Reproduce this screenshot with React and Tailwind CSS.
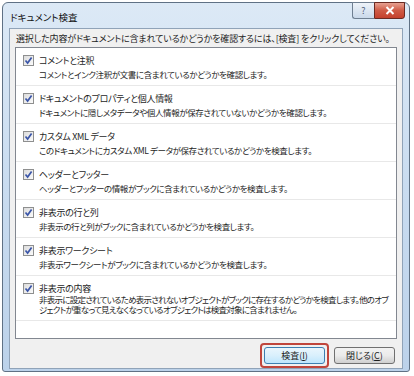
import React from "react";

const items = [
  ["コメントと注釈", ["コメントとインク注釈が文書に含まれているかどうかを確認します。"]],
  ["ドキュメントのプロパティと個人情報", ["ドキュメントに隠しメタデータや個人情報が保存されていないかどうかを確認します。"]],
  ["カスタム XML データ", ["このドキュメントにカスタム XML データが保存されているかどうかを検査します。"]],
  ["ヘッダーとフッター", ["ヘッダーとフッターの情報がブックに含まれているかどうかを検査します。"]],
  ["非表示の行と列", ["非表示の行と列がブックに含まれているかどうかを検査します。"]],
  ["非表示ワークシート", ["非表示ワークシートがブックに含まれているかどうかを検査します。"]],
  [
    "非表示の内容",
    [
      "非表示に設定されているため表示されないオブジェクトがブックに存在するかどうかを検査します。他のオブ",
      "ジェクトが重なって見えなくなっているオブジェクトは検査対象に含まれません。",
    ],
  ],
];

function CheckBox() {
  return (
    <div className="w-[11px] h-[11px] border border-[#8e8f8f] bg-gradient-to-br from-[#dcdcdc] to-[#fbfbfb] flex items-center justify-center shrink-0">
      <svg width="9" height="9" viewBox="0 0 9 9">
        <path d="M1.5 4.5 L3.6 7 L7.6 1.5" fill="none" stroke="#3b56a8" strokeWidth="1.7" />
      </svg>
    </div>
  );
}

export default function App() {
  return (
    <div
      className="w-[414px] h-[376px] bg-white pt-[2px] pl-[2px] overflow-hidden text-[#1e1e1e] [font-feature-settings:'palt']"
      style={{ fontFamily: '"Noto Sans CJK JP", "Noto Sans", sans-serif' }}
    >
      <div className="w-[408px] h-[370px] rounded-t-[6px] rounded-b-[3px] border border-[#5f7185] bg-gradient-to-b from-[#dce9f6] via-[#c9dcf0] to-[#bcd2ea] flex flex-col px-[6px] pb-[5px]">
        {/* title bar */}
        <div className="h-[25px] flex items-start justify-between shrink-0">
          <div className="text-[9.5px] leading-[9.5px] pt-[10px] pl-[1px] text-[#111]">ドキュメント検査</div>
          <div className="flex mr-[-2px] mt-[-1px]">
            <div className="w-[22px] h-[17px] border border-[#6f7f91] border-r-0 rounded-bl-[3px] bg-gradient-to-b from-[#eef3f9] to-[#cad9ea] flex items-center justify-center text-[9px] leading-none text-[#50627a]">
              ?
            </div>
            <div className="w-[31px] h-[17px] border border-[#6b2a22] rounded-br-[3px] bg-gradient-to-b from-[#e6a091] via-[#cf5a45] to-[#c4402c] flex items-center justify-center">
              <svg width="10" height="9" viewBox="0 0 10 9">
                <path d="M1.5 1 L8.5 8 M8.5 1 L1.5 8" stroke="#ffffff" strokeWidth="2" />
              </svg>
            </div>
          </div>
        </div>
        {/* content */}
        <div className="flex-1 border border-[#90a3b8] bg-[#f0f0f0] flex flex-col px-[5px]">
          <div className="text-[9px] leading-[17px] pt-[1px] pl-[1px] whitespace-nowrap tracking-[-0.15px]">
            選択した内容がドキュメントに含まれているかどうかを確認するには、[検査] をクリックしてください。
          </div>
          <div className="h-[292px] border border-[#828790] bg-white flex flex-col">
            {items.map(([title, desc], i) => {
              const multi = desc.length > 1;
              return (
                <div
                  key={i}
                  className={
                    multi
                      ? "border-b border-[#e8e8e8] flex pl-[7px] pt-[6px] pb-[6px]"
                      : "border-b border-[#e8e8e8] flex pl-[7px] pt-[6px] pb-[5px]"
                  }
                >
                  <div className="pt-[1px]">
                    <CheckBox />
                  </div>
                  <div className="pl-[5px] flex flex-col">
                    <div className="text-[9px] leading-[14px] whitespace-nowrap tracking-[-0.3px]">{title}</div>
                    {multi ? (
                      <div className="mt-[-2px]">
                        {desc.map((d, j) => (
                          <div key={j} className="text-[8.5px] leading-[10px] whitespace-nowrap tracking-[-0.75px]">
                            {d}
                          </div>
                        ))}
                      </div>
                    ) : (
                      <div className="text-[8.5px] leading-[12px] whitespace-nowrap tracking-[-0.4px]">{desc[0]}</div>
                    )}
                  </div>
                </div>
              );
            })}
          </div>
          <div className="flex justify-end items-center gap-[5px] pt-[4px] pr-[1px]">
            <div className="rounded-[4px] border-2 border-[#c0463c] p-[2px]">
              <div className="w-[61px] h-[17px] rounded-[3px] border border-[#3c7fb1] bg-gradient-to-b from-[#eaf6fd] via-[#d9f0fc] to-[#bee6fd] flex items-center justify-center text-[9px] leading-none">
                <span>
                  検査(<span className="underline">I</span>)
                </span>
              </div>
            </div>
            <div className="w-[61px] h-[17px] rounded-[3px] border border-[#707070] bg-gradient-to-b from-[#f2f2f2] via-[#ebebeb] to-[#cfcfcf] flex items-center justify-center text-[9px] leading-none mr-[1px]">
              <span>
                閉じる(<span className="underline">C</span>)
              </span>
            </div>
          </div>
        </div>
      </div>
    </div>
  );
}
